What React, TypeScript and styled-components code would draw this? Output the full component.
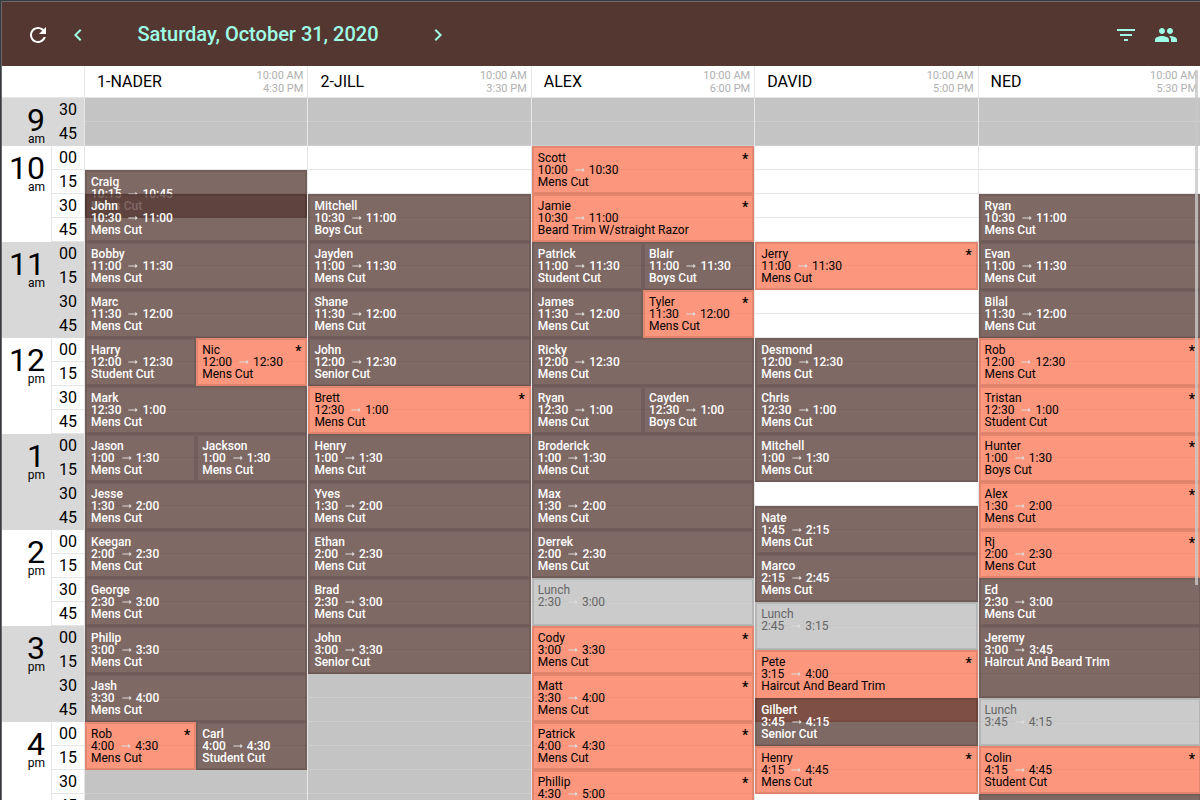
import React from "react";
import styled, { createGlobalStyle, css } from "styled-components";

const GlobalStyle = createGlobalStyle`
  *, *::before, *::after { box-sizing: border-box; }
  body {
    margin: 0;
    background: #fff;
    font-family: Roboto, "Liberation Sans", sans-serif;
    -webkit-font-smoothing: antialiased;
  }
  button {
    font: inherit;
    color: inherit;
    margin: 0;
    padding: 0;
    border: 0;
    background: none;
    cursor: pointer;
  }
`;

const SLOT = 24;

const Frame = styled.div`
  position: relative;
  height: 100vh;
  overflow: hidden;
  border-left: 1px solid #36393e;
  border-top: 1px solid #36393e;
`;

const Shell = styled.div`
  border-left: 1px solid #6b6b6b;
  border-top: 1px solid #6b6b6b;
`;

const Toolbar = styled.header`
  display: flex;
  align-items: center;
  height: 64px;
  padding: 2px 22px 0 24px;
  background: #543731;
  color: #9fffe6;
`;

const IconButton = styled.button<{ $light?: boolean }>`
  display: flex;
  align-items: center;
  justify-content: center;
  width: 24px;
  height: 24px;
  color: ${(p) => (p.$light ? "#fff" : "inherit")};
`;

const DateNav = styled.div`
  display: flex;
  align-items: center;
  justify-content: space-between;
  width: 384px;
  margin-left: 16px;
`;

const DateTitle = styled.h1`
  margin: 0;
  padding-bottom: 2px;
  font-size: 20px;
  line-height: 24px;
  font-weight: 500;
`;

const Actions = styled.div`
  display: flex;
  gap: 16px;
  margin-left: auto;
`;

const Board = styled.div`
  display: grid;
  grid-template-columns: 49px 33px repeat(5, minmax(0, 1fr));
  margin-right: -1px;
  background: #fff;
`;

const Corner = styled.div`
  grid-column: span 2;
  height: 32px;
  border-bottom: 1px solid #e6e6e6;
`;

const StaffHeader = styled.div`
  display: flex;
  align-items: center;
  justify-content: space-between;
  height: 32px;
  padding: 0 4px 0 12px;
  border-left: 1px solid #e6e6e6;
  border-bottom: 1px solid #e6e6e6;
`;

const StaffName = styled.h2`
  margin: 0;
  font-size: 16px;
  line-height: 24px;
  font-weight: 400;
  color: #000;
`;

const Shift = styled.div`
  font-size: 11px;
  line-height: 13px;
  text-align: right;
  color: #b0b0b0;
`;

const TimeAxis = styled.div`
  grid-column: span 2;
`;

const HourRow = styled.div<{ $shaded: boolean }>`
  display: grid;
  grid-template-columns: 49px 33px;
  background: ${(p) => (p.$shaded ? "#d8d8d8" : "#fff")};
  --line: ${(p) => (p.$shaded ? "#d8d8d8" : "#e6e6e6")};
`;

const HourLabel = styled.div`
  display: flex;
  flex-direction: column;
  align-items: flex-end;
  padding: 8px 6px 0 0;
`;

const HourNumber = styled.span`
  font-size: 32px;
  line-height: 28px;
`;

const Meridiem = styled.span`
  font-size: 12px;
  line-height: 10px;
`;

const Minutes = styled.div`
  border-left: 1px solid var(--line);
`;

const Minute = styled.div`
  height: ${SLOT}px;
  padding-right: 7px;
  border-bottom: 1px solid var(--line);
  font-size: 16px;
  line-height: 23px;
  text-align: right;
`;

const StaffColumn = styled.section`
  display: grid;
  grid-template-columns: repeat(2, minmax(0, 1fr));
  grid-auto-rows: ${SLOT}px;
  border-left: 1px solid #e6e6e6;
`;

const Slot = styled.div<{ $row: number; $closed: boolean }>`
  grid-row: ${(p) => p.$row};
  grid-column: 1 / -1;
  background: ${(p) => (p.$closed ? "#c4c4c4" : "#fff")};
  border-bottom: 1px solid ${(p) => (p.$closed ? "#cecece" : "#e6e6e6")};
`;

type Kind = "done" | "new" | "break";

const kinds = {
  done: css`
    background: rgba(84, 55, 49, 0.75);
    color: #fff;
    font-weight: 500;
  `,
  new: css`
    background: rgba(251, 115, 80, 0.75);
    color: #000;
  `,
  break: css`
    background: rgba(186, 186, 186, 0.75);
    color: #666;
  `,
};

const Booking = styled.button<{ $kind: Kind; $row: number; $span: number; $lane: string }>`
  display: flex;
  flex-direction: column;
  align-items: flex-start;
  grid-row: ${(p) => p.$row} / span ${(p) => p.$span};
  grid-column: ${(p) => p.$lane};
  position: relative;
  padding: 4px;
  border: 2px solid rgba(0, 0, 0, 0.1);
  overflow: hidden;
  font-size: 12px;
  line-height: 12px;
  text-align: left;
  white-space: nowrap;
  ${(p) => kinds[p.$kind]}
`;

const TimeRange = styled.span`
  display: flex;
  align-items: center;
`;

const Arrow = styled.svg`
  width: 14px;
  height: 12px;
  margin: 0 2px 0 5px;
  fill: #dedede;
`;

const Star = styled.span`
  position: absolute;
  top: 4px;
  right: 4px;
  font-size: 14px;
  line-height: 14px;
  font-weight: 500;
`;

const ScrollThumb = styled.div`
  position: absolute;
  top: 69px;
  right: 2px;
  width: 3px;
  height: 515px;
  background: rgba(200, 200, 200, 0.8);
`;

type Appt = {
  name: string;
  start: string;
  end: string;
  service?: string;
  kind?: Kind;
  lane?: 1 | 2;
};

type Staff = {
  name: string;
  from: string;
  to: string;
  closesAt?: string;
  appts: Appt[];
};

const a = (
  name: string,
  start: string,
  end: string,
  service?: string,
  kind: Kind = "done",
  lane?: 1 | 2
): Appt => ({ name, start, end, service, kind, lane });

const staff: Staff[] = [
  {
    name: "1-NADER",
    from: "10:00 AM",
    to: "4:30 PM",
    closesAt: "4:30",
    appts: [
      a("Craig", "10:15", "10:45", "Mens Cut"),
      a("John", "10:30", "11:00", "Mens Cut"),
      a("Bobby", "11:00", "11:30", "Mens Cut"),
      a("Marc", "11:30", "12:00", "Mens Cut"),
      a("Harry", "12:00", "12:30", "Student Cut", "done", 1),
      a("Nic", "12:00", "12:30", "Mens Cut", "new", 2),
      a("Mark", "12:30", "1:00", "Mens Cut"),
      a("Jason", "1:00", "1:30", "Mens Cut", "done", 1),
      a("Jackson", "1:00", "1:30", "Mens Cut", "done", 2),
      a("Jesse", "1:30", "2:00", "Mens Cut"),
      a("Keegan", "2:00", "2:30", "Mens Cut"),
      a("George", "2:30", "3:00", "Mens Cut"),
      a("Philip", "3:00", "3:30", "Mens Cut"),
      a("Jash", "3:30", "4:00", "Mens Cut"),
      a("Rob", "4:00", "4:30", "Mens Cut", "new", 1),
      a("Carl", "4:00", "4:30", "Student Cut", "done", 2),
    ],
  },
  {
    name: "2-JILL",
    from: "10:00 AM",
    to: "3:30 PM",
    closesAt: "3:30",
    appts: [
      a("Mitchell", "10:30", "11:00", "Boys Cut"),
      a("Jayden", "11:00", "11:30", "Mens Cut"),
      a("Shane", "11:30", "12:00", "Mens Cut"),
      a("John", "12:00", "12:30", "Senior Cut"),
      a("Brett", "12:30", "1:00", "Mens Cut", "new"),
      a("Henry", "1:00", "1:30", "Mens Cut"),
      a("Yves", "1:30", "2:00", "Mens Cut"),
      a("Ethan", "2:00", "2:30", "Mens Cut"),
      a("Brad", "2:30", "3:00", "Mens Cut"),
      a("John", "3:00", "3:30", "Senior Cut"),
    ],
  },
  {
    name: "ALEX",
    from: "10:00 AM",
    to: "6:00 PM",
    appts: [
      a("Scott", "10:00", "10:30", "Mens Cut", "new"),
      a("Jamie", "10:30", "11:00", "Beard Trim W/straight Razor", "new"),
      a("Patrick", "11:00", "11:30", "Student Cut", "done", 1),
      a("Blair", "11:00", "11:30", "Boys Cut", "done", 2),
      a("James", "11:30", "12:00", "Mens Cut", "done", 1),
      a("Tyler", "11:30", "12:00", "Mens Cut", "new", 2),
      a("Ricky", "12:00", "12:30", "Mens Cut"),
      a("Ryan", "12:30", "1:00", "Mens Cut", "done", 1),
      a("Cayden", "12:30", "1:00", "Boys Cut", "done", 2),
      a("Broderick", "1:00", "1:30", "Mens Cut"),
      a("Max", "1:30", "2:00", "Mens Cut"),
      a("Derrek", "2:00", "2:30", "Mens Cut"),
      a("Lunch", "2:30", "3:00", undefined, "break"),
      a("Cody", "3:00", "3:30", "Mens Cut", "new"),
      a("Matt", "3:30", "4:00", "Mens Cut", "new"),
      a("Patrick", "4:00", "4:30", "Mens Cut", "new"),
      a("Phillip", "4:30", "5:00", "Mens Cut", "new"),
    ],
  },
  {
    name: "DAVID",
    from: "10:00 AM",
    to: "5:00 PM",
    appts: [
      a("Jerry", "11:00", "11:30", "Mens Cut", "new"),
      a("Desmond", "12:00", "12:30", "Mens Cut"),
      a("Chris", "12:30", "1:00", "Mens Cut"),
      a("Mitchell", "1:00", "1:30", "Mens Cut"),
      a("Nate", "1:45", "2:15", "Mens Cut"),
      a("Marco", "2:15", "2:45", "Mens Cut"),
      a("Lunch", "2:45", "3:15", undefined, "break"),
      a("Pete", "3:15", "4:00", "Haircut And Beard Trim", "new"),
      a("Gilbert", "3:45", "4:15", "Senior Cut"),
      a("Henry", "4:15", "4:45", "Mens Cut", "new"),
    ],
  },
  {
    name: "NED",
    from: "10:00 AM",
    to: "5:30 PM",
    appts: [
      a("Ryan", "10:30", "11:00", "Mens Cut"),
      a("Evan", "11:00", "11:30", "Mens Cut"),
      a("Bilal", "11:30", "12:00", "Mens Cut"),
      a("Rob", "12:00", "12:30", "Mens Cut", "new"),
      a("Tristan", "12:30", "1:00", "Student Cut", "new"),
      a("Hunter", "1:00", "1:30", "Boys Cut", "new"),
      a("Alex", "1:30", "2:00", "Mens Cut", "new"),
      a("Rj", "2:00", "2:30", "Mens Cut", "new"),
      a("Ed", "2:30", "3:00", "Mens Cut"),
      a("Jeremy", "3:00", "3:45", "Haircut And Beard Trim"),
      a("Lunch", "3:45", "4:15", undefined, "break"),
      a("Colin", "4:15", "4:45", "Student Cut", "new"),
      a("", "4:45", "5:00"),
    ],
  },
];

const hours = [
  { hour: 9, half: "am", minutes: ["30", "45"] },
  ...[10, 11, 12, 1, 2, 3, 4].map((hour) => ({
    hour,
    half: hour === 10 || hour === 11 ? "am" : "pm",
    minutes: ["00", "15", "30", "45"],
  })),
];

const SLOT_COUNT = 30;

// Grid row of a clock time; row 1 is 9:30 am.
function rowOf(time: string): number {
  const [h, m] = time.split(":").map(Number);
  const hour24 = h < 9 ? h + 12 : h;
  return (hour24 * 60 + m - 570) / 15 + 1;
}

function laneOf(lane?: 1 | 2): string {
  return lane ? String(lane) : "1 / -1";
}

function BookingCard({ appt }: { appt: Appt }) {
  const row = rowOf(appt.start);
  return (
    <Booking
      type="button"
      $kind={appt.kind ?? "done"}
      $row={row}
      $span={rowOf(appt.end) - row}
      $lane={laneOf(appt.lane)}
    >
      {appt.name && (
        <>
          <span>{appt.name}</span>
          <TimeRange>
            {appt.start}
            <Arrow viewBox="0 3 24 18" aria-hidden="true">
              <path d="M16.01 11H4v2h12.01v3L20 12l-3.99-4z" />
            </Arrow>
            {appt.end}
          </TimeRange>
          {appt.service && <span>{appt.service}</span>}
          {appt.kind === "new" && <Star>*</Star>}
        </>
      )}
    </Booking>
  );
}

function Icon({ d, size = 24 }: { d: string; size?: number }) {
  return (
    <svg width={size} height={size} viewBox="0 0 24 24" fill="currentColor" aria-hidden="true">
      <path d={d} />
    </svg>
  );
}

export default function App() {
  return (
    <Frame>
      <GlobalStyle />
      <Shell>
        <Toolbar>
          <IconButton type="button" aria-label="Refresh" $light>
            <Icon d="M17.65 6.35C16.2 4.9 14.21 4 12 4c-4.42 0-7.99 3.58-7.99 8s3.57 8 7.99 8c3.73 0 6.84-2.55 7.73-6h-2.08c-.82 2.33-3.04 4-5.65 4-3.31 0-6-2.69-6-6s2.69-6 6-6c1.66 0 3.14.69 4.22 1.78L13 11h7V4l-2.35 2.35z" />
          </IconButton>
          <DateNav>
            <IconButton type="button" aria-label="Previous day">
              <Icon d="M15.41 7.41L14 6l-6 6 6 6 1.41-1.41L10.83 12z" />
            </IconButton>
            <DateTitle>Saturday, October 31, 2020</DateTitle>
            <IconButton type="button" aria-label="Next day">
              <Icon d="M10 6L8.59 7.41 13.17 12l-4.58 4.59L10 18l6-6z" />
            </IconButton>
          </DateNav>
          <Actions>
            <IconButton type="button" aria-label="Filter">
              <Icon d="M10 18h4v-2h-4v2zM3 6v2h18V6H3zm3 7h12v-2H6v2z" />
            </IconButton>
            <IconButton type="button" aria-label="Staff">
              <Icon d="M16 11c1.66 0 2.99-1.34 2.99-3S17.66 5 16 5c-1.66 0-3 1.34-3 3s1.34 3 3 3zm-8 0c1.66 0 2.99-1.34 2.99-3S9.66 5 8 5C6.34 5 5 6.34 5 8s1.34 3 3 3zm0 2c-2.33 0-7 1.17-7 3.5V19h14v-2.5c0-2.33-4.67-3.5-7-3.5zm8 0c-.29 0-.62.02-.97.05 1.16.84 1.97 1.97 1.97 3.45V19h6v-2.5c0-2.33-4.67-3.5-7-3.5z" />
            </IconButton>
          </Actions>
        </Toolbar>
        <Board>
          <Corner />
          {staff.map((s) => (
            <StaffHeader key={s.name}>
              <StaffName>{s.name}</StaffName>
              <Shift>
                <div>{s.from}</div>
                <div>{s.to}</div>
              </Shift>
            </StaffHeader>
          ))}
          <TimeAxis>
            {hours.map((h, i) => (
              <HourRow key={h.hour} $shaded={i % 2 === 0}>
                <HourLabel>
                  <HourNumber>{h.hour}</HourNumber>
                  <Meridiem>{h.half}</Meridiem>
                </HourLabel>
                <Minutes>
                  {h.minutes.map((m) => (
                    <Minute key={m}>{m}</Minute>
                  ))}
                </Minutes>
              </HourRow>
            ))}
          </TimeAxis>
          {staff.map((s) => (
            <StaffColumn key={s.name} aria-label={s.name}>
              {Array.from({ length: SLOT_COUNT }, (_, i) => (
                <Slot
                  key={i}
                  $row={i + 1}
                  $closed={i < 2 || (s.closesAt !== undefined && i + 1 >= rowOf(s.closesAt))}
                />
              ))}
              {s.appts.map((appt) => (
                <BookingCard key={appt.start + appt.name} appt={appt} />
              ))}
            </StaffColumn>
          ))}
        </Board>
      </Shell>
      <ScrollThumb />
    </Frame>
  );
}
